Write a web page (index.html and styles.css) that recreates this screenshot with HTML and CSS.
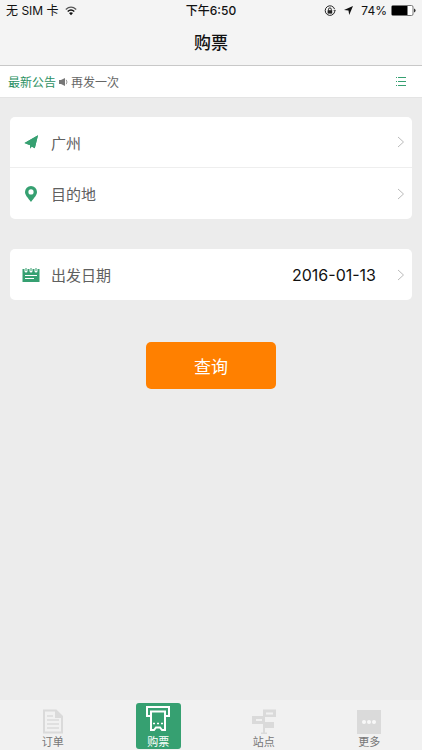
FILE: index.html
```html
<!DOCTYPE html>
<html lang="zh-CN">
<head>
<meta charset="utf-8">
<meta name="viewport" content="width=device-width, initial-scale=1">
<title>购票</title>
<link rel="stylesheet" href="styles.css">
</head>
<body>
<header class="top">
  <div class="status">
    <div class="status-left">
      <span>无 SIM 卡</span>
      <svg width="12" height="10" viewBox="0 0 12 10" fill="none" stroke="#111" aria-hidden="true">
        <path d="M.8 3.4Q6-1.2 11.2 3.4" stroke-width="1.3" stroke="#555"/>
        <path d="M2.7 5.5Q6 2.6 9.3 5.5" stroke-width="1.5"/>
        <path d="M4 7Q6 5.4 8 7L6 9.2Z" fill="#111" stroke="none"/>
      </svg>
    </div>
    <span class="time">下午6:50</span>
    <div class="status-right">
      <svg width="12" height="12" viewBox="0 0 12 12" fill="none" stroke="#222" aria-hidden="true">
        <path d="M10.6 7A4.8 4.8 0 1 1 10.6 4.2"/>
        <path d="M9.4 5.2h2.6l-1.3 2z" fill="#222" stroke="none"/>
        <path d="M4.5 5.5V4.3a1.4 1.4 0 0 1 2.8 0v1.2"/>
        <path d="M3.6 5.2h4.6v3.4H3.6z" fill="#222" stroke="none"/>
      </svg>
      <svg class="locate" width="9" height="9" viewBox="0 0 9 9" aria-hidden="true"><path d="M9 0L5.2 9L4.5 4.6L0 4.1Z" fill="#111"/></svg>
      <span>74%</span>
      <svg width="25" height="11" viewBox="0 0 25 11" aria-hidden="true">
        <rect x=".5" y=".5" width="21.5" height="10" rx="1.5" fill="#fff" stroke="#777"/>
        <path d="M1 1h15.5v9H1z"/>
        <path d="M23 3.5q1.6.6 1.6 2t-1.6 2z" fill="#333"/>
      </svg>
    </div>
  </div>
  <h1 class="title">购票</h1>
</header>

<div class="notice">
  <span class="notice-tag">最新公告</span>
  <svg width="9" height="8" viewBox="0 0 9 8" aria-hidden="true">
    <path d="M0 2h2L6 0v8L2 6H0z" fill="#777"/>
    <path d="M7.2 1.8q1.6 2.2 0 4.4" fill="none" stroke="#999"/>
  </svg>
  <span class="notice-text">再发一次</span>
  <button class="notice-list" type="button" aria-label="公告列表">
    <svg width="10" height="9" viewBox="0 0 10 9" fill="#36a071" aria-hidden="true">
      <path d="M0 0h1v1H0zM2 0H10v1H2zM0 4h1v1H0zM2 4H10v1H2zM0 8h1v1H0zM2 8H10v1H2z"/>
    </svg>
  </button>
</div>

<main class="content">
  <div class="card">
    <button class="row" type="button">
      <svg class="row-icon" viewBox="0 0 20 20" fill="#36a071" aria-hidden="true"><path d="M17 3.200L3.500 11L7.800 12.800L14.500 6.500L9 13.200V16.800L10.800 14.800L13.800 16.300Z"/><path d="M17 3.200L3.500 11L7.800 12.800L8.600 12.900L13.800 16.300Z"/></svg>
      <span class="label">广州</span>
      <svg class="chevron" viewBox="0 0 8 12" aria-hidden="true"><path d="M1 1l5.500 5L1 11"/></svg>
    </button>
    <button class="row" type="button">
      <svg class="row-icon" viewBox="0 0 20 20" fill="#36a071" fill-rule="evenodd" aria-hidden="true"><path d="M10 18C7 14 4 11 4 8a6 6 0 0 1 12 0c0 3-3 6-6 10zM10 5.300a2.600 2.600 0 1 0 0 5.200 2.600 2.600 0 0 0 0-5.200z"/></svg>
      <span class="label">目的地</span>
      <svg class="chevron" viewBox="0 0 8 12" aria-hidden="true"><path d="M1 1l5.500 5L1 11"/></svg>
    </button>
  </div>

  <div class="card">
    <button class="row" type="button">
      <svg class="row-icon" viewBox="0 0 20 20" aria-hidden="true">
        <path d="M1.500 4H3.500V6a1.500 1.500 0 0 0 3 0V4H8.500V6a1.500 1.500 0 0 0 3 0V4H13.500V6a1.500 1.500 0 0 0 3 0V4H18.500V17H1.500Z" fill="#36a071"/>
        <path d="M5 3v3M10 3v3M15 3v3" stroke="#36a071"/>
        <path d="M4 10.500h12M4 13.500h9" stroke="#fff"/>
      </svg>
      <span class="label">出发日期</span>
      <span class="date">2016-01-13</span>
      <svg class="chevron" viewBox="0 0 8 12" aria-hidden="true"><path d="M1 1l5.500 5L1 11"/></svg>
    </button>
  </div>

  <button class="search" type="button">查询</button>
</main>

<nav class="tabs">
  <a class="tab" href="#orders">
    <svg viewBox="0 0 26 26" fill="none" stroke="#dadada" stroke-width="2" aria-hidden="true">
      <path d="M4 1.500h12l6 6v16H4z"/><path d="M15 1v8h8z" fill="#dadada" stroke="none"/><path d="M7 7h6M7 11h12M7 15h12M7 19h12" stroke-width="1.500"/>
    </svg>
    <span>订单</span>
  </a>
  <a class="tab active" href="#tickets" aria-current="page">
    <svg viewBox="0 0 26 29" fill="none" stroke="#fff" stroke-width="2" aria-hidden="true">
      <path d="M5 10H2V1h22v9h-3"/><path d="M6 5.500h14V24h-3l-2-2.500h-4L9 24H6z"/><path d="M8 17.500h2M12 17.500h2M16 17.500h2" stroke-width="1.500"/>
    </svg>
    <span>购票</span>
  </a>
  <a class="tab" href="#stations">
    <svg viewBox="0 0 26 26" fill="#dadada" aria-hidden="true">
      <path d="M12 .5h13V8H14v5h9v6h-9v4.500h2V25h-6v-1.500h2V15H1V7h11z"/>
      <path d="M15 3.500h7v2h-7zM5 10h6v2H5z" fill="#f1f1f1"/>
    </svg>
    <span>站点</span>
  </a>
  <a class="tab" href="#more">
    <svg viewBox="0 0 26 26" aria-hidden="true">
      <path d="M1 1h24v24H1z" fill="#dadada"/>
      <g fill="#f8f8f8"><circle cx="8" cy="13" r="2"/><circle cx="13" cy="13" r="2"/><circle cx="18" cy="13" r="2"/></g>
    </svg>
    <span>更多</span>
  </a>
</nav>
</body>
</html>
```

FILE: styles.css
```css
* {
  box-sizing: border-box;
}

body {
  display: flex;
  flex-direction: column;
  min-height: 100vh;
  margin: 0;
  background: #ececec;
  color: #111;
  font-family: Inter, "Noto Sans CJK SC", sans-serif;
}

button {
  padding: 0;
  border: 0;
  background: none;
  color: inherit;
  font: inherit;
  cursor: pointer;
}

svg {
  display: block;
  flex: none;
}

.top {
  border-bottom: 1px solid #c8c8c8;
  background: #f4f4f4;
}

.status {
  display: grid;
  grid-template-columns: 1fr auto 1fr;
  align-items: center;
  height: 21px;
  padding: 0 6px;
  font-size: 12px;
  line-height: 20px;
}

.status-left,
.status-right {
  display: flex;
  align-items: center;
  gap: 6px;
}

.status-right {
  justify-content: flex-end;
  gap: 4px;
}

.locate {
  margin: 0 4px;
}

.time {
  font-weight: 500;
}

.title {
  margin: 0;
  font-size: 17px;
  font-weight: 500;
  line-height: 44px;
  text-align: center;
}

.notice {
  display: flex;
  align-items: center;
  gap: 3px;
  height: 32px;
  padding: 0 8px;
  border-bottom: 1px solid #e4e4e4;
  background: #fff;
  font-size: 12px;
}

.notice-tag {
  color: #2b9062;
}

.notice-text {
  color: #666;
}

.notice-list {
  margin-left: auto;
  padding: 8px;
}

.content {
  display: flex;
  flex: 1;
  flex-direction: column;
  gap: 30px;
  padding: 19px 10px;
}

.card {
  border-radius: 5px;
  background: #fff;
}

.row {
  display: flex;
  align-items: center;
  width: 100%;
  height: 51px;
  padding: 0 7px 0 11px;
  font-size: 15px;
  text-align: left;
}

.row:not(:last-child) {
  border-bottom: 1px solid #eee;
}

.row-icon {
  width: 20px;
  height: 20px;
}

.label {
  flex: 1;
  margin-left: 10px;
  color: #606060;
}

.date {
  margin-right: 21px;
  font-size: 16px;
}

.chevron {
  width: 8px;
  height: 12px;
  fill: none;
  stroke: #bbb;
}

.search {
  align-self: center;
  width: 130px;
  height: 47px;
  margin-top: 12px;
  border-radius: 5px;
  background: #ff8000;
  color: #fff;
  font-size: 17px;
}

.tabs {
  display: grid;
  grid-template-columns: repeat(4, 1fr);
  justify-items: center;
  height: 50px;
  padding: 3px 0 2px;
  background: #f1f1f1;
}

.tab {
  display: flex;
  flex-direction: column;
  align-items: center;
  width: 45px;
  padding-top: 6px;
  border-radius: 3px;
  color: #777;
  font-size: 11px;
  line-height: 14px;
  text-decoration: none;
}

.tab svg {
  width: 26px;
  height: 26px;
}

.tab.active {
  padding-top: 3px;
  background: #36a071;
  color: #fff;
}

.tab.active svg {
  height: 29px;
}
```
